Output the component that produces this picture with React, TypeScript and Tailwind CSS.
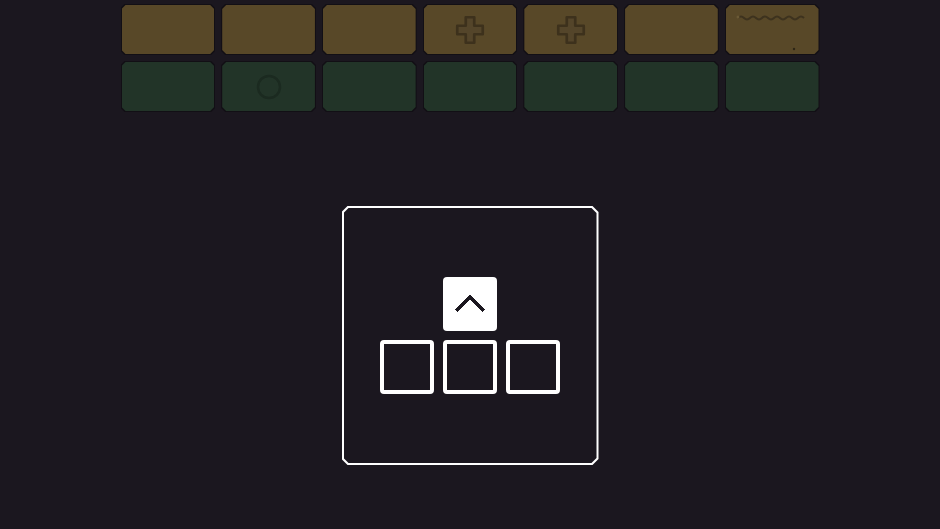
const chamfer = '[clip-path:polygon(4px_0,calc(100%-4px)_0,100%_4px,100%_calc(100%-4px),calc(100%-4px)_100%,4px_100%,0_calc(100%-4px),0_4px)]'

type Mark = 'none' | 'plus' | 'circle' | 'scribble'

const topRow: Mark[] = ['none', 'none', 'none', 'plus', 'plus', 'none', 'scribble']
const bottomRow: Mark[] = ['none', 'circle', 'none', 'none', 'none', 'none', 'none']

function TileMark({ mark }: { mark: Mark }) {
  if (mark === 'plus') {
    return (
      <svg width="34" height="34" viewBox="0 0 32 32" className="text-[#3d311c]">
        <path
          d="M12 4 h8 v8 h8 v8 h-8 v8 h-8 v-8 h-8 v-8 h8 z"
          fill="#54452a"
          stroke="currentColor"
          strokeWidth="2.5"
          strokeLinejoin="round"
        />
      </svg>
    )
  }
  if (mark === 'circle') {
    return (
      <svg width="30" height="30" viewBox="0 0 30 30">
        <circle cx="15" cy="15" r="11" fill="none" stroke="#1b2a20" strokeWidth="2.5" />
      </svg>
    )
  }
  if (mark === 'scribble') {
    return (
      <svg width="94" height="51" viewBox="0 0 94 51" className="absolute inset-0">
        <path
          d="M12 13 q3 -3 6 0 t6 0 t6 0 t6 0 t6 0 t6 0 t6 0 t6 0 t6 0 t6 0 t6 0"
          fill="none"
          stroke="#3d321e"
          strokeWidth="2"
        />
        <circle cx="12" cy="12" r="1.5" fill="#6b5a36" />
        <circle cx="68" cy="44" r="1.2" fill="#2e2616" />
      </svg>
    )
  }
  return null
}

function Tile({ mark, tone }: { mark: Mark; tone: 'gold' | 'green' }) {
  return (
    <div className={`bg-[#120f15] p-[1px] ${chamfer}`}>
      <div
        className={`relative flex h-[49px] items-center justify-center ${chamfer} ${
          tone === 'gold' ? 'bg-[#584828]' : 'bg-[#223428]'
        }`}
      >
        <TileMark mark={mark} />
      </div>
    </div>
  )
}

function Key({ filled }: { filled?: boolean }) {
  if (filled) {
    return (
      <div className="flex h-[54px] w-[54px] items-center justify-center rounded-[4px] bg-white">
        <svg width="34" height="22" viewBox="0 0 34 22" shapeRendering="crispEdges">
          <polyline points="3,18 17,4 31,18" fill="none" stroke="#1b171f" strokeWidth="3.5" />
        </svg>
      </div>
    )
  }
  return <div className="h-[54px] w-[54px] rounded-[4px] border-[4px] border-white bg-[#1b171f]" />
}

export default function App() {
  return (
    <div className="flex h-[529px] w-full flex-col items-center overflow-hidden bg-[#1b171f] pt-[4px] font-['Liberation_Sans',sans-serif]">
      {/* Slot grid */}
      <div className="grid w-[699px] grid-cols-7 gap-x-[6px] gap-y-[6px]">
        {topRow.map((m, i) => (
          <Tile key={`t${i}`} mark={m} tone="gold" />
        ))}
        {bottomRow.map((m, i) => (
          <Tile key={`b${i}`} mark={m} tone="green" />
        ))}
      </div>

      {/* Controls panel */}
      <div className="mt-[94px] bg-white p-[2px] [clip-path:polygon(6px_0,calc(100%-6px)_0,100%_6px,100%_calc(100%-6px),calc(100%-6px)_100%,6px_100%,0_calc(100%-6px),0_6px)]">
        <div className="flex h-[255px] w-[253px] flex-col items-center justify-center gap-[9px] bg-[#1b171f] pb-[1px] [clip-path:polygon(5px_0,calc(100%-5px)_0,100%_5px,100%_calc(100%-5px),calc(100%-5px)_100%,5px_100%,0_calc(100%-5px),0_5px)]">
          <Key filled />
          <div className="flex gap-[9px]">
            <Key />
            <Key />
            <Key />
          </div>
        </div>
      </div>
    </div>
  )
}
